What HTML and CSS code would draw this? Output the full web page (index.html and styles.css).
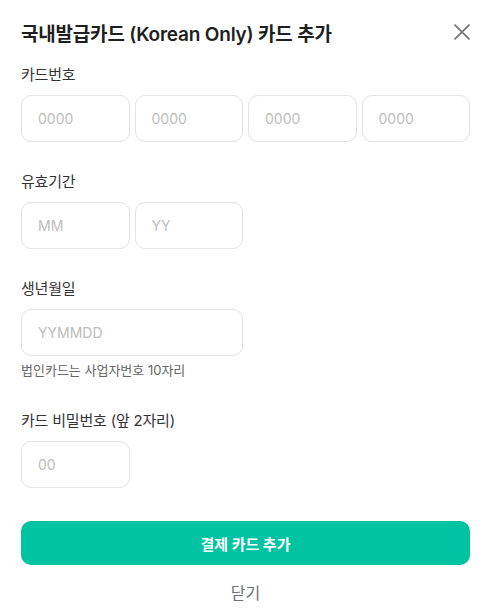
FILE: index.html
```html
<!DOCTYPE html>
<html lang="ko">
<head>
<meta charset="utf-8">
<link rel="stylesheet" href="styles.css">
</head>
<body>
<div class="modal">
  <div class="header">
    <h1 class="title">국내발급카드 (Korean Only) 카드 추가</h1>
    <button class="close" aria-label="닫기">
      <svg width="16" height="16" viewBox="0 0 16 16"><path d="M0.5 0.5L15.5 15.5M15.5 0.5L0.5 15.5" stroke="#747474" stroke-width="1.6" fill="none"/></svg>
    </button>
  </div>

  <div class="field">
    <div class="label">카드번호</div>
    <div class="row four">
      <div class="input">0000</div>
      <div class="input">0000</div>
      <div class="input">0000</div>
      <div class="input">0000</div>
    </div>
  </div>

  <div class="field">
    <div class="label">유효기간</div>
    <div class="row four">
      <div class="input">MM</div>
      <div class="input">YY</div>
    </div>
  </div>

  <div class="field">
    <div class="label">생년월일</div>
    <div class="row four">
      <div class="input span2">YYMMDD</div>
    </div>
    <div class="help">법인카드는 사업자번호 10자리</div>
  </div>

  <div class="field">
    <div class="label">카드 비밀번호 (앞 2자리)</div>
    <div class="row four">
      <div class="input">00</div>
    </div>
  </div>

  <button class="submit">결제 카드 추가</button>
  <button class="cancel">닫기</button>
</div>
</body>
</html>
```

FILE: styles.css
```css
* { box-sizing: border-box; }
body {
  margin: 0;
  background: #fff;
  font-family: Inter, "Noto Sans CJK KR", sans-serif;
  color: #222;
}
.modal {
  padding: 20px 20px 0 21px;
  display: flex;
  flex-direction: column;
}
.header {
  display: flex;
  align-items: center;
  justify-content: space-between;
  height: 24px;
}
.title {
  margin: 0;
  font-size: 19px;
  font-weight: 600;
  color: #1f1f1f;
  letter-spacing: -0.2px;
}
.close {
  border: 0;
  background: none;
  padding: 0;
  width: 16px;
  height: 16px;
  display: flex;
}
.field {
  margin-top: 20px;
}
.field + .field { margin-top: 29px; }
.label {
  font-size: 15px;
  line-height: 22px;
  color: #333;
  margin-bottom: 9px;
  letter-spacing: -0.2px;
}
.row.four {
  display: grid;
  grid-template-columns: repeat(4, 1fr);
  gap: 5px;
}
.input {
  height: 47px;
  border: 1px solid #e3e3e3;
  border-radius: 10px;
  padding: 0 16px;
  display: flex;
  align-items: center;
  font-size: 14px;
  color: #bdbdbd;
}
.span2 { grid-column: span 2; }
.help {
  margin-top: 4px;
  font-size: 13px;
  color: #666;
  line-height: 20px;
}
.help + * { }
.field:has(.help) + .field { margin-top: 30px; }
.submit {
  margin-top: 33px;
  height: 44px;
  border: 0;
  border-radius: 10px;
  background: #00c4a1;
  color: #fff;
  font-family: inherit;
  font-size: 15px;
  font-weight: 700;
}
.cancel {
  margin-top: 17px;
  border: 0;
  background: none;
  font-family: inherit;
  font-size: 16px;
  color: #6e7178;
  padding: 0;
  line-height: 22px;
}
```
